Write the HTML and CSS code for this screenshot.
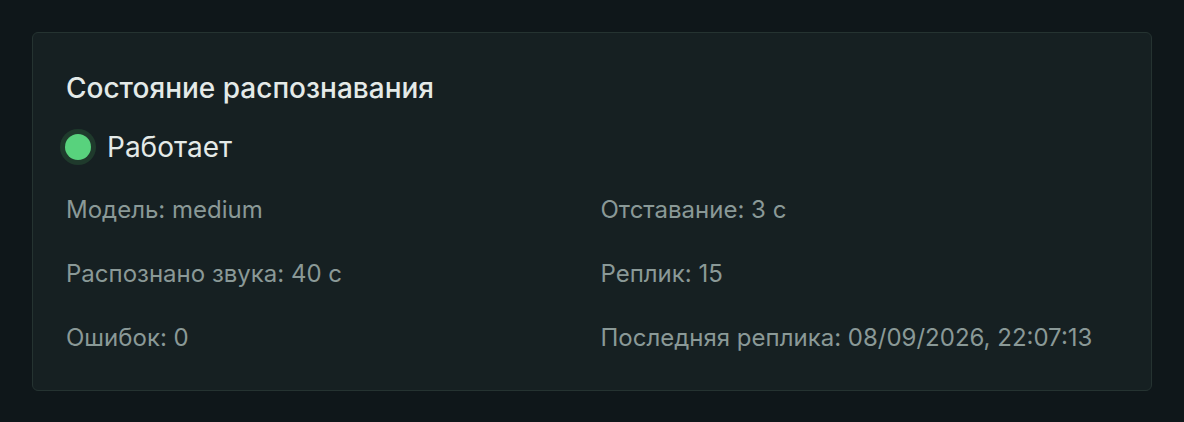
FILE: index.html
```html
<!DOCTYPE html>
<html lang="ru">
<head>
<meta charset="utf-8">
<link rel="stylesheet" href="styles.css">
</head>
<body>
<div class="page">
  <section class="card">
    <h2 class="title">Состояние распознавания</h2>
    <div class="status">
      <span class="dot"></span>
      <span class="status-text">Работает</span>
    </div>
    <div class="grid">
      <div class="item">Модель: medium</div>
      <div class="item">Отставание: 3 с</div>
      <div class="item">Распознано звука: 40 с</div>
      <div class="item">Реплик: 15</div>
      <div class="item">Ошибок: 0</div>
      <div class="item">Последняя реплика: 08/09/2026, 22:07:13</div>
    </div>
  </section>
</div>
</body>
</html>
```
FILE: styles.css
```css
html, body {
  margin: 0;
  padding: 0;
  background: #0f171a;
  font-family: Inter, "Noto Sans", sans-serif;
}
.page {
  padding: 32px;
  height: 422px;
  box-sizing: border-box;
}
.card {
  background: #162022;
  border: 1px solid #253331;
  border-radius: 6px;
  padding: 37px 32px 36px 33px;
}
.title {
  margin: 0;
  font-size: 28px;
  line-height: 36px;
  font-weight: 500;
  color: #e4eae8;
}
.status {
  margin-top: 23px;
  display: flex;
  align-items: center;
  gap: 16px;
  height: 36px;
}
.dot {
  width: 26px;
  height: 26px;
  border-radius: 50%;
  background: #58d27d;
  box-shadow: 0 0 0 5px #1f3a2c;
  margin-left: -1px;
}
.status-text {
  font-size: 28px;
  line-height: 36px;
  color: #e4eae8;
}
.grid {
  margin-top: 29px;
  display: grid;
  grid-template-columns: 1fr 1fr;
  column-gap: 16px;
  row-gap: 32px;
}
.item {
  font-size: 24px;
  line-height: 32px;
  color: #8a9997;
}
```
